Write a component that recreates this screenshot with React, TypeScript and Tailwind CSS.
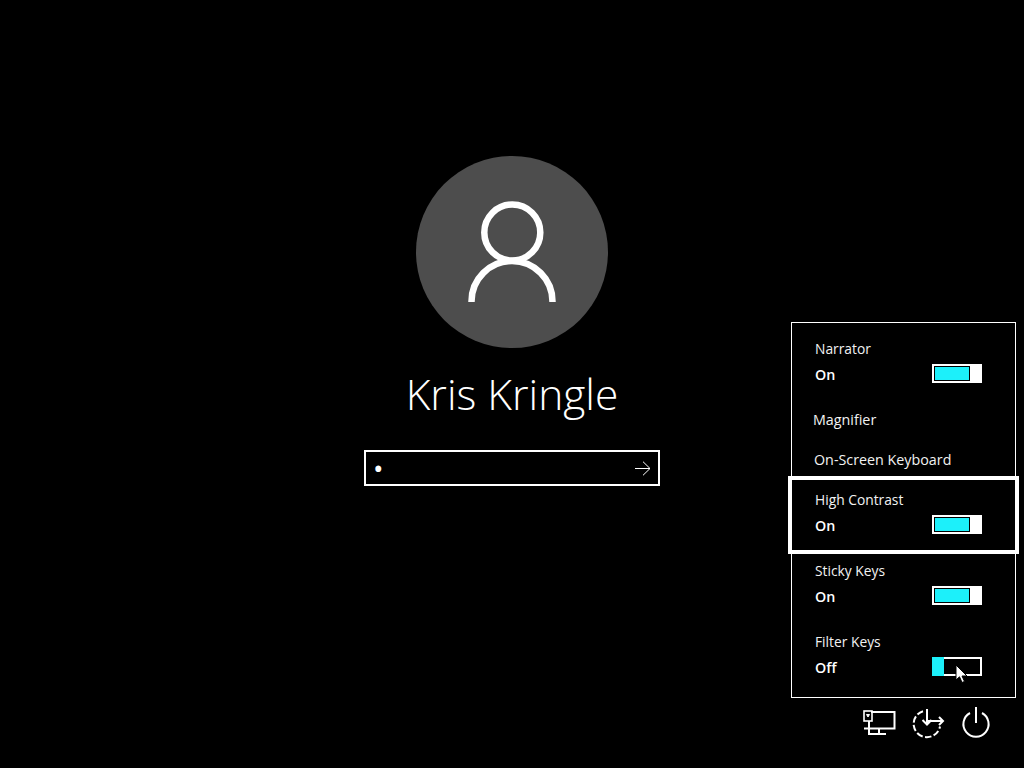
function Toggle({ on }: { on: boolean }) {
  if (on) {
    return (
      <div className="flex h-[19px] w-[50px] border-2 border-white bg-white">
        <div className="h-full w-[36px] border border-black bg-[#1cf0fa]" />
      </div>
    );
  }
  return (
    <div className="flex h-[19px] w-[50px] border-2 border-l-0 border-white bg-black">
      <div className="-my-[2px] h-[19px] w-[12px] bg-[#1cf0fa]" />
    </div>
  );
}

function ToggleRow({ label, state, className = "" }: { label: string; state: "On" | "Off"; className?: string }) {
  return (
    <div className={`flex h-[71px] flex-col pl-[23px] pr-[33px] pt-[14px] ${className}`}>
      <div className="h-[20px] text-[13.8px] leading-[20px] text-[#f2f2f2]">{label}</div>
      <div className="mt-[6px] flex h-[20px] items-start justify-between">
        <span className="text-[14.3px] font-semibold leading-[20px] text-white">{state}</span>
        <div className="-mt-[1px]">
          <Toggle on={state === "On"} />
        </div>
      </div>
    </div>
  );
}

function NetworkIcon() {
  return (
    <svg width="34" height="28" viewBox="0 0 34 28" fill="none" stroke="white" strokeWidth="2">
      <path d="M9 3H32.5V19.5H2" />
      <rect x="2" y="2" width="8" height="10" strokeWidth="1.6" />
      <path d="M4.5 5.5H7.5L6 8Z" fill="white" strokeWidth="1" />
      <path d="M7 12V25H24" />
      <path d="M17 19.5V25" />
    </svg>
  );
}

function RestartIcon() {
  return (
    <svg width="34" height="32" viewBox="0 0 34 32" fill="none" stroke="white" strokeWidth="2">
      <path d="M11 3.2A13.3 13.3 0 1 0 28 18.5" strokeDasharray="6.5 2.4" />
      <path d="M15 1V16.5" />
      <path d="M10.5 12L15 16.5L19.5 12" />
      <path d="M16 13H31" />
      <path d="M27 9L31 13L27 17" />
    </svg>
  );
}

function PowerIcon() {
  return (
    <svg width="30" height="32" viewBox="0 0 30 32" fill="none" stroke="white" strokeWidth="2">
      <path d="M15 1V17" />
      <path d="M9 7A12.6 12.6 0 1 0 21 7" />
    </svg>
  );
}

export default function App() {
  return (
    <div
      className="relative h-[768px] w-[1024px] overflow-hidden bg-black text-white"
      style={{ fontFamily: '"Open Sans", "Noto Sans", sans-serif' }}
    >
      <main className="flex flex-col items-center pt-[156px]">
        <div className="flex h-[192px] w-[192px] items-center justify-center rounded-full bg-[#4d4d4d]">
          <svg width="96" height="106" viewBox="0 0 96 106" fill="none" stroke="white" strokeWidth="6.5">
            <circle cx="48.3" cy="33.5" r="28" />
            <path d="M7.5 103V102.5A40.5 40.5 0 0 1 88.5 102.5V103" />
          </svg>
        </div>
        <h1 className="mt-[16px] h-[60px] text-[42.5px] font-light leading-[60px] text-white">Kris Kringle</h1>
        <div className="mt-[26px] flex h-[36px] w-[296px] items-center justify-between border-2 border-white pl-[7px] pr-[7px]">
          <span className="text-[28px] leading-[20px] text-white">•</span>
          <svg width="16" height="15" viewBox="0 0 16 15" fill="none" stroke="white" strokeWidth="1">
            <path d="M0 7.5H15" />
            <path d="M8 0.7L15 7.5L8 14.3" />
          </svg>
        </div>
      </main>

      <aside className="absolute left-[791px] top-[322px] flex w-[225px] flex-col">
        <div className="flex h-[376px] flex-col border border-white pt-[2px]">
          <ToggleRow label="Narrator" state="On" className="h-[76px]" />
          <div className="flex h-[38px] items-center pl-[21px] text-[14.3px] text-[#f2f2f2]">Magnifier</div>
          <div className="flex h-[37px] items-end pb-[6px] pl-[22px] text-[14.3px] text-[#f2f2f2]">On-Screen Keyboard</div>
          <div className="relative">
            <div className="absolute -left-[4px] -right-[4px] top-0 h-[78px] border-4 border-white" />
            <ToggleRow label="High Contrast" state="On" />
          </div>
          <ToggleRow label="Sticky Keys" state="On" />
          <div className="relative">
            <ToggleRow label="Filter Keys" state="Off" />
            <svg
              className="absolute left-[163px] top-[46px]"
              width="13"
              height="20"
              viewBox="0 0 13 20"
              fill="white"
              stroke="black"
              strokeWidth="1"
            >
              <path d="M1 1V16L4.5 12.8L7 18.5L9.5 17.4L7 12H12Z" />
            </svg>
          </div>
        </div>
        <div className="mt-[11px] flex items-start pl-[71px]">
          <NetworkIcon />
          <div className="-mt-[1px] ml-[16px]">
            <RestartIcon />
          </div>
          <div className="-mt-[3px] ml-[15px]">
            <PowerIcon />
          </div>
        </div>
      </aside>
    </div>
  );
}
